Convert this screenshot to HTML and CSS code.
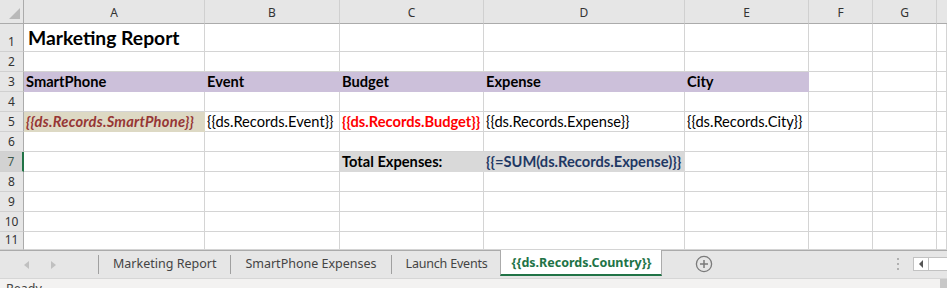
FILE: index.html
```html
<!DOCTYPE html>
<html>
<head>
<meta charset="utf-8">
<link rel="stylesheet" href="styles.css">
</head>
<body>
<div class="sheet">
  <div class="grid">
    <div class="corner"><span class="tri"></span></div>
    <div class="colhdr">A</div>
    <div class="colhdr">B</div>
    <div class="colhdr">C</div>
    <div class="colhdr">D</div>
    <div class="colhdr">E</div>
    <div class="colhdr">F</div>
    <div class="colhdr">G</div>
    <div class="colhdr last"></div>

    <div class="rowhdr">1</div>
    <div class="cell title">Marketing Report</div>
    <div class="cell"></div><div class="cell"></div><div class="cell"></div><div class="cell"></div><div class="cell"></div><div class="cell"></div><div class="cell"></div>

    <div class="rowhdr">2</div>
    <div class="cell"></div><div class="cell"></div><div class="cell"></div><div class="cell"></div><div class="cell"></div><div class="cell"></div><div class="cell"></div><div class="cell"></div>

    <div class="rowhdr">3</div>
    <div class="cell purple b">SmartPhone</div>
    <div class="cell purple b">Event</div>
    <div class="cell purple b">Budget</div>
    <div class="cell purple b">Expense</div>
    <div class="cell purple b">City</div>
    <div class="cell"></div><div class="cell"></div><div class="cell"></div>

    <div class="rowhdr">4</div>
    <div class="cell"></div><div class="cell"></div><div class="cell"></div><div class="cell"></div><div class="cell"></div><div class="cell"></div><div class="cell"></div><div class="cell"></div>

    <div class="rowhdr">5</div>
    <div class="cell olive">{{ds.Records.SmartPhone}}</div>
    <div class="cell">{{ds.Records.Event}}</div>
    <div class="cell red">{{ds.Records.Budget}}</div>
    <div class="cell">{{ds.Records.Expense}}</div>
    <div class="cell">{{ds.Records.City}}</div>
    <div class="cell"></div><div class="cell"></div><div class="cell"></div>

    <div class="rowhdr">6</div>
    <div class="cell"></div><div class="cell"></div><div class="cell"></div><div class="cell"></div><div class="cell"></div><div class="cell"></div><div class="cell"></div><div class="cell"></div>

    <div class="rowhdr sel">7</div>
    <div class="cell"></div><div class="cell"></div>
    <div class="cell gray b">Total Expenses:</div>
    <div class="cell gray b navy">{{=SUM(ds.Records.Expense)}}</div>
    <div class="cell"></div><div class="cell"></div><div class="cell"></div><div class="cell"></div>

    <div class="rowhdr">8</div>
    <div class="cell"></div><div class="cell"></div><div class="cell"></div><div class="cell"></div><div class="cell"></div><div class="cell"></div><div class="cell"></div><div class="cell"></div>

    <div class="rowhdr">9</div>
    <div class="cell"></div><div class="cell"></div><div class="cell"></div><div class="cell"></div><div class="cell"></div><div class="cell"></div><div class="cell"></div><div class="cell"></div>

    <div class="rowhdr">10</div>
    <div class="cell"></div><div class="cell"></div><div class="cell"></div><div class="cell"></div><div class="cell"></div><div class="cell"></div><div class="cell"></div><div class="cell"></div>

    <div class="rowhdr">11</div>
    <div class="cell"></div><div class="cell"></div><div class="cell"></div><div class="cell"></div><div class="cell"></div><div class="cell"></div><div class="cell"></div><div class="cell"></div>
  </div>

  <div class="tabbar">
    <div class="nav">
      <span class="arrow left"></span>
      <span class="arrow right"></span>
    </div>
    <div class="tab">Marketing Report</div>
    <div class="tab">SmartPhone Expenses</div>
    <div class="tab narrow">Launch Events</div>
    <div class="tab active">{{ds.Records.Country}}</div>
    <div class="add">
      <svg width="18" height="18" viewBox="0 0 18 18"><circle cx="9" cy="9" r="7.6" fill="none" stroke="#7a7a7a" stroke-width="1.3"/><path d="M9 5v8M5 9h8" stroke="#7a7a7a" stroke-width="1.5"/></svg>
    </div>
    <div class="spacer"></div>
    <div class="dots"><i></i><i></i><i></i></div>
    <div class="hscroll">
      <div class="sbtn"><span class="sarrow"></span></div>
      <div class="strack"></div>
    </div>
  </div>

  <div class="status">
    <span class="ready">Ready</span>
    <span class="sthumb"></span>
  </div>
</div>
</body>
</html>
```

FILE: styles.css
```css
html, body {
  margin: 0;
  padding: 0;
  background: #ffffff;
  overflow: hidden;
}

.sheet {
  width: 947px;
  height: 288px;
  display: flex;
  flex-direction: column;
  overflow: hidden;
}

.grid {
  display: grid;
  grid-template-columns: 24px 181px 135px 144px 201px 124px 64px 64px 1fr;
  grid-template-rows: 24px 28px repeat(9, 20px) 18px;
  font-family: Lato, "Liberation Sans", sans-serif;
  font-size: 14.67px;
  color: #000;
}

.corner {
  background: #e6e6e6;
  border-right: 1px solid #ababab;
  border-bottom: 1px solid #ababab;
  box-sizing: border-box;
  position: relative;
}

.tri {
  position: absolute;
  right: 3px;
  bottom: 4px;
  width: 0;
  height: 0;
  border-left: 11px solid transparent;
  border-bottom: 11px solid #b9b9b9;
}

.colhdr {
  background: #e6e6e6;
  border-right: 1px solid #d0d0d0;
  border-bottom: 1px solid #ababab;
  box-sizing: border-box;
  font-family: "Noto Sans", "Open Sans", sans-serif;
  font-size: 12px;
  color: #333;
  display: flex;
  align-items: center;
  justify-content: center;
  padding-top: 1px;
}

.colhdr.last {
  border-right: none;
}

.rowhdr {
  background: #e6e6e6;
  border-right: 1px solid #ababab;
  border-bottom: 1px solid #d0d0d0;
  box-sizing: border-box;
  font-family: "Noto Sans", "Open Sans", sans-serif;
  font-size: 12px;
  color: #333;
  display: flex;
  align-items: flex-end;
  justify-content: center;
  padding-bottom: 1px;
  line-height: 16px;
}

.rowhdr.sel {
  background: #d2d2d2;
  border-right: 2px solid #217346;
  color: #3d5a4d;
}

.cell {
  border-right: 1px solid #d4d4d4;
  border-bottom: 1px solid #d4d4d4;
  box-sizing: border-box;
  display: flex;
  align-items: flex-end;
  padding: 0 0 1px 2px;
  line-height: 17px;
  white-space: nowrap;
  overflow: visible;
}

.title {
  font-size: 19.3px;
  font-weight: 700;
  padding-left: 4px;
  padding-bottom: 2px;
  line-height: 22px;
}

.b {
  font-weight: 700;
}

.purple {
  background: #ccc0da;
  border-right-color: #ccc0da;
  border-bottom-color: #ccc0da;
}

.olive {
  background: #ddd9c4;
  border-right-color: #ddd9c4;
  border-bottom-color: #ddd9c4;
  color: #963634;
  font-weight: 700;
  font-style: italic;
  letter-spacing: 0.25px;
}

.red {
  color: #ff0000;
  font-weight: 700;
}

.gray {
  background: #d9d9d9;
  border-right-color: #d9d9d9;
  border-bottom-color: #d9d9d9;
}

.navy {
  color: #1f3864;
}

.tabbar {
  height: 28px;
  box-sizing: border-box;
  border-top: 1px solid #ababab;
  background: #e6e6e6;
  display: flex;
  align-items: stretch;
  font-family: "Noto Sans", "Open Sans", sans-serif;
  font-size: 12.5px;
  color: #444;
}

.nav {
  width: 98px;
  display: flex;
  align-items: center;
  padding-left: 24px;
  gap: 22px;
  box-sizing: border-box;
}

.arrow {
  width: 0;
  height: 0;
  border-top: 4px solid transparent;
  border-bottom: 4px solid transparent;
}

.arrow.left {
  border-right: 5px solid #c0c0c0;
}

.arrow.right {
  border-left: 5px solid #c0c0c0;
}

.tab {
  display: flex;
  align-items: center;
  padding: 0 14px 3px;
  border-left: 1px solid #a0a0a0;
  margin: 4px 0 4px;
  white-space: nowrap;
}

.tab.narrow {
  padding: 0 12px 3px 14px;
  letter-spacing: -0.2px;
}

.tab.active {
  margin: -1px 0 2px;
  padding: 0 10px 0 11px;
  background: #ffffff;
  border-left: 1px solid #ababab;
  border-right: 1px solid #ababab;
  border-bottom: 2px solid #217346;
  color: #217346;
  font-weight: 700;
  font-size: 12.5px;
}

.tab.active + .add {
  margin-left: 33px;
}

.add {
  display: flex;
  align-items: center;
  padding-bottom: 2px;
}

.spacer {
  flex: 1;
}

.dots {
  display: flex;
  flex-direction: column;
  justify-content: center;
  gap: 3px;
  margin-right: 14px;
  padding-bottom: 2px;
}

.dots i {
  display: block;
  width: 2px;
  height: 2px;
  background: #b0b0b0;
}

.hscroll {
  display: flex;
  align-items: center;
  width: 34px;
  padding-bottom: 2px;
}

.sbtn {
  width: 16px;
  height: 14px;
  box-sizing: border-box;
  background: #ffffff;
  border: 1px solid #c2c2c2;
  display: flex;
  align-items: center;
  justify-content: center;
}

.sarrow {
  width: 0;
  height: 0;
  border-top: 4px solid transparent;
  border-bottom: 4px solid transparent;
  border-right: 4px solid #555;
}

.strack {
  flex: 1;
  height: 14px;
  box-sizing: border-box;
  background: #ffffff;
  border-top: 1px solid #c2c2c2;
  border-bottom: 1px solid #c2c2c2;
}

.status {
  flex: 1;
  background: #f3f2f1;
  border-top: 1px solid #d6d6d6;
  display: flex;
  align-items: flex-start;
  font-family: "Noto Sans", "Open Sans", sans-serif;
  font-size: 12.5px;
  color: #444;
  overflow: hidden;
}

.ready {
  padding-left: 6px;
  margin-top: 2px;
  line-height: 16px;
}

.sthumb {
  margin-left: auto;
  width: 7px;
  height: 12px;
  background: #c8c8c8;
  margin-top: 0;
}
```
